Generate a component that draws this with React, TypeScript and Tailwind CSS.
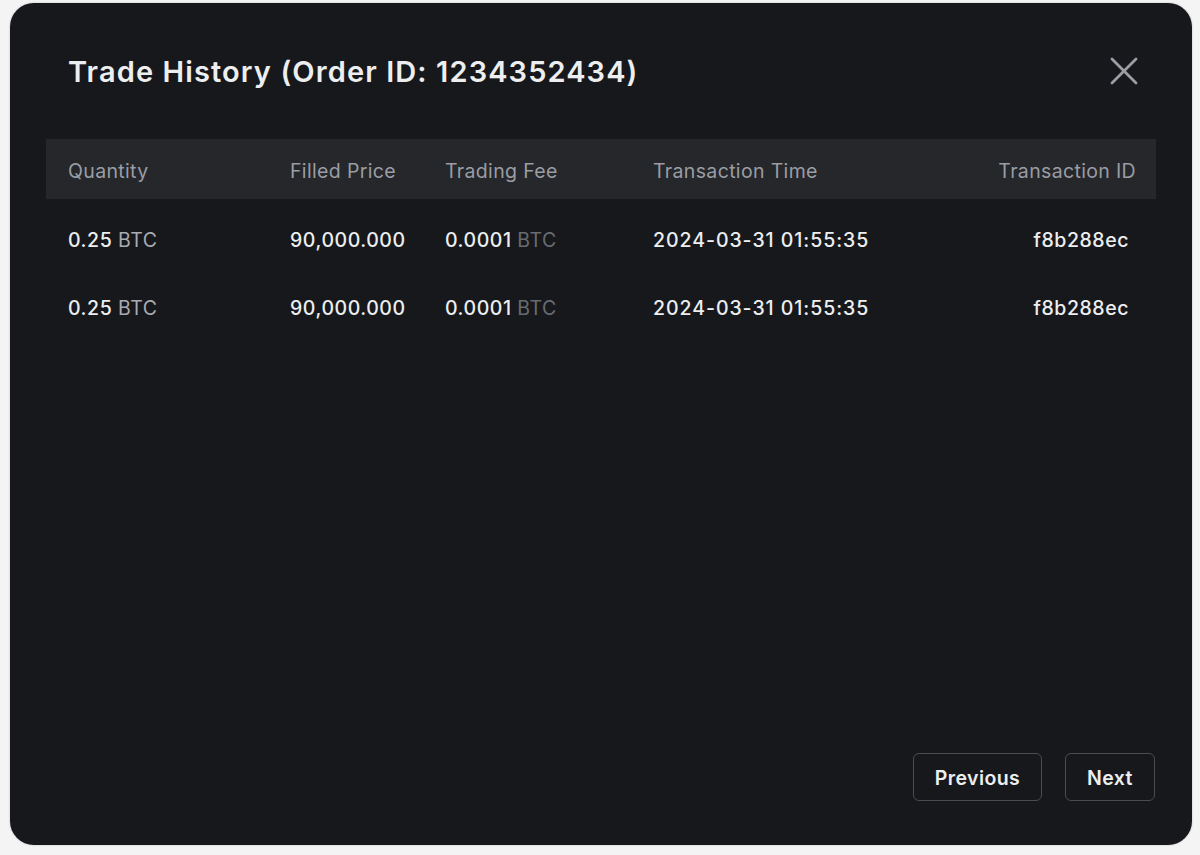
import { X } from 'lucide-react'

interface Trade {
  qty: string
  price: string
  fee: string
  time: string
  id: string
}

const TRADES: Trade[] = [
  { qty: '0.25', price: '90,000.000', fee: '0.0001', time: '2024-03-31 01:55:35', id: 'f8b288ec' },
  { qty: '0.25', price: '90,000.000', fee: '0.0001', time: '2024-03-31 01:55:35', id: 'f8b288ec' },
]

const cols = 'grid grid-cols-[222px_155px_208px_1fr_auto] items-center pl-[22px] pr-[20px]'

export default function App() {
  return (
    <div className="min-h-screen bg-[#f4f4f5] pt-[3px] font-['Inter','Noto_Sans',sans-serif]">
      <div className="mx-[10px] flex h-[842px] w-[1182px] flex-col rounded-[24px] bg-[#17181b] shadow-[0_0_2px_rgba(0,0,0,0.25)]">
        <header className="flex h-[133px] items-start justify-between pl-[58px] pr-[44px] pt-[48px]">
          <h1 className="text-[29px] font-semibold leading-[42px] tracking-[1.1px] text-[#eceef0]">
            Trade History (Order ID: 1234352434)
          </h1>
          <button type="button" className="-mt-[4px] text-[#9b9ea4]" aria-label="Close">
            <X size={48} strokeWidth={1.4} />
          </button>
        </header>

        <div className="mx-[36px] mt-[3px]">
          <div className={`${cols} h-[60px] bg-[#25272b] pt-[6px] text-[19.5px] tracking-[0.35px] text-[#9a9da3]`}>
            <span>Quantity</span>
            <span>Filled Price</span>
            <span>Trading Fee</span>
            <span>Transaction Time</span>
            <span className="text-right">Transaction ID</span>
          </div>
          <div className="pt-[6px]">
            {TRADES.map((t, i) => (
              <div
                key={i}
                className={`${cols} h-[68px] pt-[4px] text-[19.5px] font-medium tracking-[0.55px] text-[#eceef0]`}
              >
                <span>
                  {t.qty} <span className="font-normal text-[#a8abb1]">BTC</span>
                </span>
                <span>{t.price}</span>
                <span>
                  {t.fee} <span className="font-normal text-[#686b71]">BTC</span>
                </span>
                <span className="tracking-[0.95px]">{t.time}</span>
                <span className="pr-[7px] text-right">{t.id}</span>
              </div>
            ))}
          </div>
        </div>

        <footer className="mt-auto flex justify-end gap-[23px] pb-[44px] pr-[37px]">
          <button
            type="button"
            className="h-[48px] w-[129px] rounded-[6px] border border-[#4a4c51] pt-[4px] text-[19.5px] font-semibold tracking-[0.4px] text-[#eceef0]"
          >
            Previous
          </button>
          <button
            type="button"
            className="h-[48px] w-[90px] rounded-[6px] border border-[#4a4c51] pt-[4px] text-[19.5px] font-semibold tracking-[0.4px] text-[#eceef0]"
          >
            Next
          </button>
        </footer>
      </div>
    </div>
  )
}
